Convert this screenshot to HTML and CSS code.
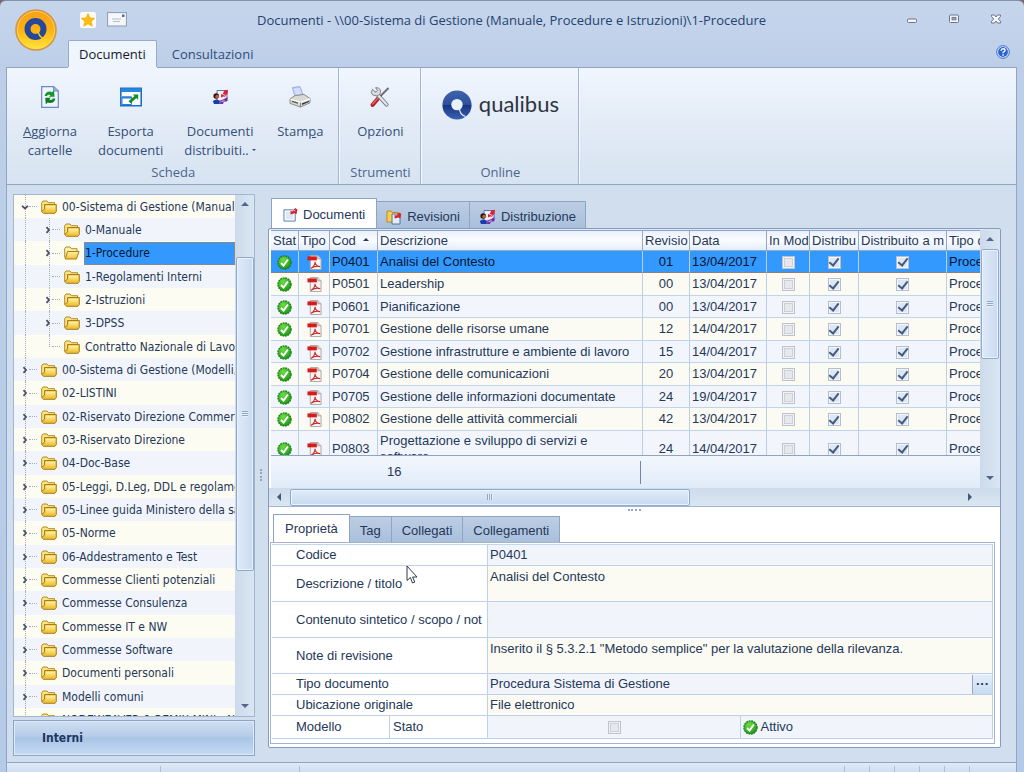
FILE: index.html
```html
<!DOCTYPE html>
<html lang="it">
<head>
<meta charset="utf-8">
<title>Documenti - 1-Procedure</title>
<link rel="stylesheet" href="styles.css">
</head>
<body>
<svg class="defs" aria-hidden="true">
  <defs>
    <linearGradient id="gold" x1="0" y1="0" x2="0" y2="1"><stop offset="0" stop-color="#fff3a8"/><stop offset="1" stop-color="#f0c030"/></linearGradient>
    <linearGradient id="orbfill" x1="0" y1="0" x2="0" y2="1"><stop offset="0" stop-color="#f9a01b"/><stop offset=".5" stop-color="#fbb212"/><stop offset="1" stop-color="#ffe83a"/></linearGradient>
    <linearGradient id="navy" x1="0" y1="0" x2="0" y2="1"><stop offset="0" stop-color="#3d62ab"/><stop offset=".48" stop-color="#2f519c"/><stop offset=".5" stop-color="#17347f"/><stop offset="1" stop-color="#3a64b4"/></linearGradient>
    <radialGradient id="green" cx=".4" cy=".3" r=".8"><stop offset="0" stop-color="#6fdc45"/><stop offset="1" stop-color="#169012"/></radialGradient>
    <symbol id="folder" viewBox="0 0 16 14"><path d="M.7 11.5V2.8L2 1h4l1.3 1.7h6.2v2" fill="#fbe58a" stroke="#b58a1c"/><path d="M3.5 4.5h11.8v7L14 13.3H2.5L.7 11.5 3.5 9z" fill="#e9c044" stroke="#a97c14"/><rect x="4.5" y="5.6" width="9.8" height="6.4" fill="url(#gold)"/></symbol>
    <symbol id="folder-open" viewBox="0 0 16 14"><path d="M.7 11.5V2.8L2 1h4l1.3 1.7h5.7v3" fill="#fbf0b0" stroke="#b58a1c"/><path d="M3.6 5.5H15L12.4 13H1.2z" fill="url(#gold)" stroke="#a97c14"/></symbol>
    <symbol id="right" viewBox="0 0 8 8"><path d="M2.500 1.200 5 4 2.500 6.800" fill="none" stroke="#4a5166" stroke-width="1.800"/></symbol>
    <symbol id="down" viewBox="0 0 8 8"><path d="M1 2.800 4 5.500l3-2.700" fill="none" stroke="#4a5166" stroke-width="1.800"/></symbol>
    <symbol id="ok" viewBox="0 0 16 16"><circle cx="8" cy="8" r="7" fill="url(#green)" stroke="#18801a" stroke-width="1.4" stroke-dasharray="2 .8"/><path d="M4.2 8.6 7 11.2l4.6-6.4" fill="none" stroke="#fff" stroke-width="2.1"/></symbol>
    <symbol id="pdf" viewBox="0 0 16 16"><path d="M3.5.5h8l3.500 3.600v11.400H3.500z" fill="#f6f4f4" stroke="#a9a3a6"/><path d="M11.500.5V4H15" fill="#d8d8d8" stroke="#a9a3a6"/><path d="M.5 1.500h10v4.200H.5z" fill="#d61a1a"/><path d="M4.200 14.200C7 12.600 8.600 9.800 8.600 7.200c0 2.800 2.200 5.200 5.400 5.200-3.600-.8-7 0-9.800 1.800z" fill="none" stroke="#cf2020" stroke-width="1.100"/></symbol>
    <symbol id="doc" viewBox="0 0 16 16"><path d="M1 3h12v12H1z" fill="#fff" stroke="#4f74b0"/><path d="M3 5h8v8H3z" fill="#dbe8f7"/><path d="M8 8V4l2 .8L13 1l2.400 1.600-1 5-2-1z" fill="#d5262c"/><path d="m11 3 2 1" stroke="#fff" stroke-width=".8"/></symbol>
    <symbol id="revs" viewBox="0 0 16 16"><path d="M1 2h4l1 1.400h6V13H1z" fill="#f8cf4c" stroke="#bb8a1c"/><path d="M6 5h8v10H6z" fill="#e4edf9" stroke="#4f74b0"/><path d="M8.600 9.500V6l2 .6L13 3.400l2.200 1.400-.8 4.600-2-.8z" fill="#d5262c"/></symbol>
    <symbol id="dist" viewBox="0 0 17 16"><path d="M5 1.500h10V12H5z" fill="#f2eef9" stroke="#5a76b4"/><circle cx="4.200" cy="7" r="2.800" fill="#2c1710"/><circle cx="5.200" cy="7.600" r="1.900" fill="#b8643a"/><path d="M.8 12q3.800-3 7 0v3H2z" fill="#1c3bb0"/><path d="M9 8.400V5.600l2-1 1.200-3 3.800-.8-.4 4-1.800 1.400-.6 1.600-2-.4z" fill="#dc2338"/><path d="M8.600 11.400 12 10l3.600-2-.4 4-3 .4-1.400 2.600H8z" fill="#772aa5"/><path d="m10 4.800 3 1.600M9.500 12.600l3-1" stroke="#fff" stroke-width=".8"/></symbol>
    <symbol id="refresh" viewBox="0 0 18 22"><path d="M.7.7h12L17.300 5v16.300H.7z" fill="#edf5fd" stroke="#7088bc" stroke-width="1.200"/><path d="M12.700.7V5h4.600" fill="#9db4dc" stroke="#7088bc"/><path d="M3.600 10q1.200-4.600 5.800-4.400l1.600.6 2-1.800.6 6.400H8l1.600-1.800q-2.600-1-3.600 1z" fill="#16962a"/><path d="M14.400 12.400q-1 4.600-5.600 4.600l-2-.6-2 1.800-.6-6.400h5.600l-1.600 1.800q2.800 1 3.600-1.200z" fill="#0f7c20"/></symbol>
    <symbol id="export" viewBox="0 0 22 19"><path d="M.8.8h20.400v17.400H.8z" fill="#fafdff" stroke="#1c70cb" stroke-width="1.600"/><path d="M1 1h20v3.600H1z" fill="#2886df"/><path d="M2 9.500h9.500V17H2z" fill="#fff" stroke="#2b7bd0"/><path d="M2 9h9.500v2H2z" fill="#2b7bd0"/><path d="m8.500 13.800 6-5.200L12.800 7h5.400v5.200l-1.800-1.600-5.900 5.200z" fill="#128d22"/></symbol>
    <symbol id="print" viewBox="0 0 22 22"><path d="M3.500 1.600 11 .6l3 8.400-8 2z" fill="#bccdfa" stroke="#8fa1db" stroke-width=".8"/><path d="m5 3.600 6-.8M5.600 5.600l6-.8M6.400 7.600l6-.8" stroke="#fff" stroke-width=".7"/><path d="m1 13 5-3.400L15 8.400l6 4v4.400L11.500 21 1 17.400z" fill="#d9d9d6" stroke="#82827e" stroke-width=".9"/><path d="m1.500 13.300 10 3L21 12.700" fill="none" stroke="#fff" stroke-width="1.200"/><path d="M11.500 16.500V21" stroke="#84847e"/><path d="m13 17.300 7-2.600v1.400L13 19z" fill="#3a3a38"/><path d="m3 15.300 6 1.800" stroke="#55554f" stroke-width="1.300"/></symbol>
    <symbol id="tools" viewBox="0 0 20 21"><path d="m18.500 1.500-10 10" stroke="#6b6f76" stroke-width="2"/><path d="m9.800 10-7.200 8.400" stroke="#b22127" stroke-width="4" stroke-linecap="round"/><path d="m9 10.400-6.600 7.400" stroke="#ee7575" stroke-width="1.200"/><path d="m6 6.500 10.600 11.600" stroke="#777b83" stroke-width="4" stroke-linecap="round"/><path d="m6 6.500 10.600 11.600" stroke="#e4e6ea" stroke-width="2.200" stroke-linecap="round"/><path d="M2.500 2.800 5.600 5.600 7.600 4 5.600 1.200q3.400-.6 4.800 2.200.8 5-3.600 6Q2 9.400 1.200 6.200z" fill="#d9dbe0" stroke="#777b83" stroke-width=".9"/></symbol>
    <symbol id="q" viewBox="0 0 30 30"><circle cx="15" cy="15" r="14.600" fill="url(#navy)"/><circle cx="15" cy="14.600" r="5.700" fill="#e9f1fa"/><path d="M17.500 18.500q0 6 6 8" fill="none" stroke="#e9f1fa" stroke-width="1.200"/></symbol>
  </defs>
</svg>

<header class="titlebar">
  <button class="orb" aria-label="Menu applicazione"><svg viewBox="0 0 42 42"><circle cx="21" cy="21" r="20" fill="url(#orbfill)" stroke="#d2964a" stroke-width="1.600"/><circle cx="21" cy="21" r="18.600" fill="none" stroke="#ffd766" stroke-width=".8"/><circle cx="20.500" cy="20" r="8" fill="none" stroke="#26489a" stroke-width="6"/><path d="M23 21.500q.5 6 5.500 8" fill="none" stroke="#fdc51e" stroke-width="1.600"/></svg></button>
  <div class="toprow">
    <button class="quick" aria-label="Preferiti"><svg width="16" height="16" viewBox="0 0 16 16"><rect width="16" height="16" rx="2" fill="#fbfaf4"/><path d="m8 1.500 2 4.300 4.800.5-3.500 3.200 1 4.700L8 11.900l-4.300 2.300 1-4.700L1.200 6.300 6 5.800z" fill="#fbbd10" stroke="#f0a81a" stroke-width=".6"/></svg></button>
    <button class="quick" aria-label="Messaggi"><svg width="20" height="15" viewBox="0 0 20 15"><rect x=".6" y=".6" width="18.800" height="13.400" fill="#f4f8fb" stroke="#8b9bb0"/><path d="M5 7h9M6 9.500h7" stroke="#b4bfc9"/><rect x="15" y="2.500" width="2.500" height="2.500" fill="#586aa8"/></svg></button>
    <h1 class="title">Documenti - \\00-Sistema di Gestione (Manuale, Procedure e Istruzioni)\1-Procedure</h1>
    <div class="winbtns">
      <button aria-label="Riduci"><svg width="12" height="12" viewBox="0 0 12 12"><rect x="1.500" y="5" width="9" height="3.500" rx="1" fill="#f4f6fa" stroke="#6c7686"/></svg></button>
      <button aria-label="Ingrandisci"><svg width="12" height="12" viewBox="0 0 12 12"><rect x="1.500" y="1" width="9" height="7.500" rx="1" fill="#f4f6fa" stroke="#6c7686"/><rect x="4" y="3.300" width="4" height="2.600" fill="#9aa4b4" stroke="#6c7686" stroke-width=".8"/></svg></button>
      <button aria-label="Chiudi"><svg width="12" height="12" viewBox="0 0 12 12"><path d="M1.500 1h3L6 3l1.500-2h3v1.500L8.300 5l2.200 2.300V9h-3L6 7 4.500 9h-3V7.300L3.700 5 1.500 2.500z" fill="#f4f6fa" stroke="#6c7686"/></svg></button>
    </div>
  </div>
  <nav class="mainTabs">
    <button class="mtab on">Documenti</button>
    <button class="mtab">Consultazioni</button>
    <button class="help" aria-label="Guida"><svg width="14" height="14" viewBox="0 0 14 14"><circle cx="7" cy="7" r="6.300" fill="#eaf2ff" stroke="#3b69c4"/><circle cx="7" cy="7" r="4.900" fill="#2a62cc"/><path d="M5 5.700q.2-1.900 2.100-1.900T9 5.500q0 .9-1.900 1.800v.9M7.100 9.300v1.400" fill="none" stroke="#fff" stroke-width="1.400"/></svg></button>
  </nav>
</header>

<section class="ribbon">
  <div class="group">
    <div class="tools">
      <button class="tool"><svg width="18" height="22"><use href="#refresh"/></svg><span><u>A</u>ggiorna<br>cartelle</span></button>
      <button class="tool"><svg width="22" height="22"><use href="#export"/></svg><span>Esporta<br>documenti</span></button>
      <button class="tool"><svg width="17" height="22"><use href="#dist"/></svg><span>Documenti<br>distribuiti.. <i class="caret"></i></span></button>
      <button class="tool"><svg width="22" height="22"><use href="#print"/></svg><span>Stam<u>p</u>a</span></button>
    </div>
    <div class="caption">Scheda</div>
  </div>
  <div class="group strumenti">
    <div class="tools">
      <button class="tool"><svg width="20" height="22"><use href="#tools"/></svg><span>Opzioni</span></button>
    </div>
    <div class="caption">Strumenti</div>
  </div>
  <div class="group online">
    <div class="tools">
      <button class="brand"><svg width="30" height="30"><use href="#q"/></svg><span>qualibus</span></button>
    </div>
    <div class="caption">Online</div>
  </div>
</section>

<main class="work">
  <aside class="side">
    <div class="treebox">
      <ul class="tree">
        <li><svg class="tg"><use href="#down"/></svg><i></i><svg class="fo"><use href="#folder"/></svg><span>00-Sistema di Gestione (Manual</span></li>
        <li class="sub"><svg class="tg"><use href="#right"/></svg><i></i><svg class="fo"><use href="#folder"/></svg><span>0-Manuale</span></li>
        <li class="sub sel"><svg class="tg"><use href="#right"/></svg><i></i><svg class="fo"><use href="#folder-open"/></svg><span>1-Procedure</span></li>
        <li class="sub"><svg class="tg"></svg><i></i><svg class="fo"><use href="#folder"/></svg><span>1-Regolamenti Interni</span></li>
        <li class="sub"><svg class="tg"><use href="#right"/></svg><i></i><svg class="fo"><use href="#folder"/></svg><span>2-Istruzioni</span></li>
        <li class="sub"><svg class="tg"><use href="#right"/></svg><i></i><svg class="fo"><use href="#folder"/></svg><span>3-DPSS</span></li>
        <li class="sub last"><svg class="tg"></svg><i></i><svg class="fo"><use href="#folder"/></svg><span>Contratto Nazionale di Lavor</span></li>
        <li><svg class="tg"><use href="#right"/></svg><i></i><svg class="fo"><use href="#folder"/></svg><span>00-Sistema di Gestione (Modelli,</span></li>
        <li><svg class="tg"><use href="#right"/></svg><i></i><svg class="fo"><use href="#folder"/></svg><span>02-LISTINI</span></li>
        <li><svg class="tg"><use href="#right"/></svg><i></i><svg class="fo"><use href="#folder"/></svg><span>02-Riservato Direzione Commer</span></li>
        <li><svg class="tg"><use href="#right"/></svg><i></i><svg class="fo"><use href="#folder"/></svg><span>03-Riservato Direzione</span></li>
        <li><svg class="tg"><use href="#right"/></svg><i></i><svg class="fo"><use href="#folder"/></svg><span>04-Doc-Base</span></li>
        <li><svg class="tg"><use href="#right"/></svg><i></i><svg class="fo"><use href="#folder"/></svg><span>05-Leggi, D.Leg, DDL e regolame</span></li>
        <li><svg class="tg"><use href="#right"/></svg><i></i><svg class="fo"><use href="#folder"/></svg><span>05-Linee guida Ministero della sa</span></li>
        <li><svg class="tg"><use href="#right"/></svg><i></i><svg class="fo"><use href="#folder"/></svg><span>05-Norme</span></li>
        <li><svg class="tg"><use href="#right"/></svg><i></i><svg class="fo"><use href="#folder"/></svg><span>06-Addestramento e Test</span></li>
        <li><svg class="tg"><use href="#right"/></svg><i></i><svg class="fo"><use href="#folder"/></svg><span>Commesse Clienti potenziali</span></li>
        <li><svg class="tg"><use href="#right"/></svg><i></i><svg class="fo"><use href="#folder"/></svg><span>Commesse Consulenza</span></li>
        <li><svg class="tg"><use href="#right"/></svg><i></i><svg class="fo"><use href="#folder"/></svg><span>Commesse IT e NW</span></li>
        <li><svg class="tg"><use href="#right"/></svg><i></i><svg class="fo"><use href="#folder"/></svg><span>Commesse Software</span></li>
        <li><svg class="tg"><use href="#right"/></svg><i></i><svg class="fo"><use href="#folder"/></svg><span>Documenti personali</span></li>
        <li><svg class="tg"><use href="#right"/></svg><i></i><svg class="fo"><use href="#folder"/></svg><span>Modelli comuni</span></li>
        <li><svg class="tg"><use href="#right"/></svg><i></i><svg class="fo"><use href="#folder"/></svg><span>NODEWEAVER &amp; REMIX MINI - N</span></li>
      </ul>
      <div class="vbar"><b class="up"></b><div class="thumb treethumb"><em></em></div><b class="dn"></b></div>
    </div>
    <button class="interni">Interni</button>
  </aside>
  <div class="split"><em></em></div>

  <section class="content">
    <nav class="tabs">
      <button class="tab on"><svg width="15" height="15"><use href="#doc"/></svg>Documenti</button>
      <button class="tab"><svg width="16" height="16"><use href="#revs"/></svg>Revisioni</button>
      <button class="tab"><svg width="17" height="16"><use href="#dist"/></svg>Distribuzione</button>
    </nav>
    <div class="panel">
      <div class="gridbox">
        <div class="gridmain">
          <div class="scroll">
            <table class="grid">
              <colgroup><col class="c1"><col class="c2"><col class="c3"><col><col class="c5"><col class="c6"><col class="c7"><col class="c8"><col class="c9"><col class="c10"></colgroup>
              <thead><tr><th>Stat</th><th>Tipo</th><th>Cod <i class="sort"></i></th><th>Descrizione</th><th>Revisio</th><th>Data</th><th>In Mod</th><th>Distribu</th><th>Distribuito a m</th><th>Tipo d</th></tr></thead>
              <tbody>
                <tr class="sel"><td class="c"><svg class="ic"><use href="#ok"/></svg></td><td class="c"><svg class="ic"><use href="#pdf"/></svg></td><td>P0401</td><td>Analisi del Contesto</td><td class="c">01</td><td>13/04/2017</td><td class="c"><input type="checkbox" disabled aria-label="In modifica"></td><td class="c"><input type="checkbox" checked aria-label="Distribuito"></td><td class="c"><input type="checkbox" checked aria-label="Distribuito a mano"></td><td>Proce</td></tr>
                <tr><td class="c"><svg class="ic"><use href="#ok"/></svg></td><td class="c"><svg class="ic"><use href="#pdf"/></svg></td><td>P0501</td><td>Leadership</td><td class="c">00</td><td>13/04/2017</td><td class="c"><input type="checkbox" disabled aria-label="In modifica"></td><td class="c"><input type="checkbox" checked aria-label="Distribuito"></td><td class="c"><input type="checkbox" checked aria-label="Distribuito a mano"></td><td>Proce</td></tr>
                <tr><td class="c"><svg class="ic"><use href="#ok"/></svg></td><td class="c"><svg class="ic"><use href="#pdf"/></svg></td><td>P0601</td><td>Pianificazione</td><td class="c">00</td><td>13/04/2017</td><td class="c"><input type="checkbox" disabled aria-label="In modifica"></td><td class="c"><input type="checkbox" checked aria-label="Distribuito"></td><td class="c"><input type="checkbox" checked aria-label="Distribuito a mano"></td><td>Proce</td></tr>
                <tr><td class="c"><svg class="ic"><use href="#ok"/></svg></td><td class="c"><svg class="ic"><use href="#pdf"/></svg></td><td>P0701</td><td>Gestione delle risorse umane</td><td class="c">12</td><td>14/04/2017</td><td class="c"><input type="checkbox" disabled aria-label="In modifica"></td><td class="c"><input type="checkbox" checked aria-label="Distribuito"></td><td class="c"><input type="checkbox" checked aria-label="Distribuito a mano"></td><td>Proce</td></tr>
                <tr><td class="c"><svg class="ic"><use href="#ok"/></svg></td><td class="c"><svg class="ic"><use href="#pdf"/></svg></td><td>P0702</td><td>Gestione infrastrutture e ambiente di lavoro</td><td class="c">15</td><td>14/04/2017</td><td class="c"><input type="checkbox" disabled aria-label="In modifica"></td><td class="c"><input type="checkbox" checked aria-label="Distribuito"></td><td class="c"><input type="checkbox" checked aria-label="Distribuito a mano"></td><td>Proce</td></tr>
                <tr><td class="c"><svg class="ic"><use href="#ok"/></svg></td><td class="c"><svg class="ic"><use href="#pdf"/></svg></td><td>P0704</td><td>Gestione delle comunicazioni</td><td class="c">20</td><td>13/04/2017</td><td class="c"><input type="checkbox" disabled aria-label="In modifica"></td><td class="c"><input type="checkbox" checked aria-label="Distribuito"></td><td class="c"><input type="checkbox" checked aria-label="Distribuito a mano"></td><td>Proce</td></tr>
                <tr><td class="c"><svg class="ic"><use href="#ok"/></svg></td><td class="c"><svg class="ic"><use href="#pdf"/></svg></td><td>P0705</td><td>Gestione delle informazioni documentate</td><td class="c">24</td><td>19/04/2017</td><td class="c"><input type="checkbox" disabled aria-label="In modifica"></td><td class="c"><input type="checkbox" checked aria-label="Distribuito"></td><td class="c"><input type="checkbox" checked aria-label="Distribuito a mano"></td><td>Proce</td></tr>
                <tr><td class="c"><svg class="ic"><use href="#ok"/></svg></td><td class="c"><svg class="ic"><use href="#pdf"/></svg></td><td>P0802</td><td>Gestione delle attività commerciali</td><td class="c">42</td><td>13/04/2017</td><td class="c"><input type="checkbox" disabled aria-label="In modifica"></td><td class="c"><input type="checkbox" checked aria-label="Distribuito"></td><td class="c"><input type="checkbox" checked aria-label="Distribuito a mano"></td><td>Proce</td></tr>
                <tr class="tall"><td class="c"><svg class="ic"><use href="#ok"/></svg></td><td class="c"><svg class="ic"><use href="#pdf"/></svg></td><td>P0803</td><td>Progettazione e sviluppo di servizi e<br>software</td><td class="c">24</td><td>14/04/2017</td><td class="c"><input type="checkbox" disabled aria-label="In modifica"></td><td class="c"><input type="checkbox" checked aria-label="Distribuito"></td><td class="c"><input type="checkbox" checked aria-label="Distribuito a mano"></td><td>Proce</td></tr>
              </tbody>
            </table>
          </div>
          <div class="total"><span>16</span><hr></div>
        </div>
        <div class="vbar wide"><b class="up"></b><div class="thumb gridthumb"><em></em></div><b class="dn"></b></div>
      </div>
      <div class="hbar"><b class="lf"></b><div class="hthumb"><em></em></div><b class="rt"></b></div>
      <div class="hsplit"><em></em></div>
      <div class="details">
        <nav class="tabs low">
          <button class="tab on">Proprietà</button>
          <button class="tab">Tag</button>
          <button class="tab">Collegati</button>
          <button class="tab">Collegamenti</button>
        </nav>
        <div class="props">
          <table>
            <colgroup><col class="p1"><col class="p2"><col><col></colgroup>
            <tr class="line"><th colspan="2">Codice</th><td colspan="2">P0401</td></tr>
            <tr class="memo"><th colspan="2">Descrizione / titolo</th><td colspan="2" class="warm">Analisi del Contesto</td></tr>
            <tr class="memo"><th colspan="2">Contenuto sintetico / scopo / not</th><td colspan="2"></td></tr>
            <tr class="memo"><th colspan="2">Note di revisione</th><td colspan="2" class="warm">Inserito il § 5.3.2.1 "Metodo semplice" per la valutazione della rilevanza.</td></tr>
            <tr class="line"><th colspan="2">Tipo documento</th><td colspan="2"><div class="lookup"><span>Procedura Sistema di Gestione</span><button aria-label="Sfoglia">···</button></div></td></tr>
            <tr class="line"><th colspan="2">Ubicazione originale</th><td colspan="2" class="warm">File elettronico</td></tr>
            <tr class="flags"><th><label for="modello">Modello</label></th><th class="stato">Stato</th><td class="c"><input id="modello" type="checkbox" disabled></td><td><div class="state"><svg class="ic"><use href="#ok"/></svg>Attivo</div></td></tr>
          </table>
        </div>
        <svg class="cursor" width="12" height="19" viewBox="0 0 12 19"><path d="M1 1v14.500l3.400-3L6.500 18l2.300-1-2.200-5H11z" fill="#fff" stroke="#333a4c"/></svg>
      </div>
    </div>
  </section>
</main>

<footer class="status"><span class="s1"></span><span class="s2"></span><span class="grow"></span><span class="s3"></span><span class="s3"></span><span class="s3"></span><span class="s3"></span><span class="s3"></span><span class="s3"></span></footer>
</body>
</html>
```

FILE: styles.css
```css
* { box-sizing: border-box; }

html { background: #7d6470; }

body {
  margin: 0;
  height: 100vh;
  display: flex;
  flex-direction: column;
  padding: 0 7px 0 6px;
  overflow: hidden;
  font: 13px/16px "Liberation Sans", Arial, sans-serif;
  color: #253858;
  background: linear-gradient(#c5d5ec, #bdcfe8 67px, #b5cae6);
  border-top: 1px solid #8594ac;
  border-radius: 6px 6px 0 0;
}

button {
  font: inherit;
  color: inherit;
  background: none;
  border: 0;
  padding: 0;
  margin: 0;
}

svg { flex: none; }
.defs { position: absolute; width: 0; height: 0; }

/* Title bar */
.titlebar, .ribbon { font-family: "Open Sans", "Noto Sans", sans-serif; }
.titlebar { position: relative; height: 66px; flex: none; display: flex; flex-direction: column; }
.orb { position: absolute; left: 9px; top: 8px; width: 42px; height: 42px; }
.orb svg { display: block; }
.toprow { height: 37px; display: flex; align-items: center; padding-left: 74px; gap: 11px; }
.quick { height: 16px; display: flex; align-items: center; }
.title { flex: 1; margin: 0 10px 0 0; text-align: center; font-size: 13px; font-weight: 400; line-height: 18px; white-space: nowrap; color: #26436f; }
.winbtns { display: flex; gap: 30px; padding-right: 15px; }
.winbtns button { width: 12px; height: 12px; }
.winbtns svg { display: block; }
.mainTabs { flex: 1; display: flex; padding: 2px 0 0 62px; color: #2f4d7c; }
.mtab { padding: 0 10px; margin-right: 4px; font-size: 13px; border: 1px solid transparent; border-bottom: 0; }
.mtab.on { color: #111b2c; background: #eff5fd; border-color: #98abc8; border-radius: 2px 2px 0 0; box-shadow: 0 1px #eff5fd; z-index: 1; }
.help { margin-left: auto; padding-right: 7px; height: 24px; display: flex; align-items: center; }

/* Ribbon */
.ribbon {
  flex: none;
  height: 118px;
  display: flex;
  color: #354f78;
  background: linear-gradient(#f1f6fe, #e3ecf7 45%, #d7e3f1);
  border: 1px solid #91a4c1;
}
.group { display: flex; flex-direction: column; border-right: 1px solid #a3b7d4; box-shadow: 1px 0 #f4f8fd; padding: 0 8px 2px 9px; }
.tools { flex: 1; display: flex; justify-content: center; gap: 7px; }
.tool { display: flex; flex-direction: column; align-items: center; padding: 0 7px; font-size: 13px; line-height: 19px; white-space: nowrap; }
.tool svg { margin-top: 18px; }
.tool span { margin-top: auto; height: 40px; }
.caption { text-align: center; font-size: 13px; line-height: 20px; color: #4a658f; }
.strumenti { width: 82px; }
.online { width: 158px; }
.caret { display: inline-block; border: 2px solid transparent; border-top-color: #354f78; vertical-align: 2px; }
.brand { display: flex; align-items: center; gap: 7px; height: 34px; margin-top: 20px; font: 22px/28px Lato, sans-serif; color: #2f3440; }
.brand span { padding-bottom: 2px; }

/* Work area */
.work {
  flex: 1;
  min-height: 0;
  display: flex;
  padding: 9px 15px 6px 6px;
  background: #d0deed;
  border: solid #8fa6c8;
  border-width: 0 1px;
}
.side { width: 242px; display: flex; flex-direction: column; gap: 3px; }
.treebox { flex: 1; min-height: 0; display: flex; border: 1px solid #a0b6d3; background: #fff; overflow: hidden; }
.tree { flex: 1; min-width: 0; margin: 0; padding: 0; list-style: none; overflow: hidden; font: 12px/16px "DejaVu Sans Condensed", "DejaVu Sans", sans-serif; }
.tree li { position: relative; display: flex; align-items: center; height: 23px; padding-left: 7px; background: #fdfcf3; white-space: nowrap; }
.tree li:nth-child(3n) { height: 24px; }
.tree li:nth-child(even) { background: #f1f5fb; }
.tree li.sub { padding-left: 30px; }
.tree li::before, .tree li.sub::after { content: ""; position: absolute; left: 11px; top: 0; bottom: 0; border-left: 1px dotted #a5afc2; }
.tree li.sub::after { left: 35px; }
.tree li.sub.last::after { bottom: 50%; }
.tg { width: 8px; height: 8px; z-index: 1; }
.tree i { width: 8px; border-top: 1px dotted #a5afc2; margin-right: 4px; }
.fo { width: 16px; height: 14px; }
.tree span { flex: 1; min-width: 0; overflow: hidden; margin-left: 4px; padding-left: 1px; }
.tree .sel span { color: #041530; background: #3399ff; border: 1px solid #8c8684; line-height: 21px; padding-left: 0; }

.interni { height: 36px; flex: none; text-align: left; padding-left: 28px; font: bold 12px/16px "DejaVu Sans Condensed", "DejaVu Sans", sans-serif; color: #1d365f; background: linear-gradient(#cfdff2, #b5cce8 45%, #a9c5e6 50%, #c5dbf3); border: 1px solid #8ca5c9; box-shadow: inset 0 0 0 1px #dce9f7; }
.split { width: 13px; display: flex; align-items: center; justify-content: center; padding-right: 2px; }
.split em { width: 2px; height: 12px; border-left: 2px dotted #93a5c0; }

/* Scroll bars */
.vbar { width: 19px; flex: none; display: flex; flex-direction: column; align-items: center; background: linear-gradient(90deg, #ccdaea, #dae6f2); }
.vbar.wide { width: 20px; }
.vbar b, .hbar b { width: 0; height: 0; border: 4px solid transparent; }
.vbar .up { border-bottom-color: #53658a; border-top: 0; margin: 7px 0 8px; }
.vbar .dn { border-top-color: #53658a; border-bottom: 0; margin: auto 0 8px; }
.thumb, .hthumb { display: flex; align-items: center; justify-content: center; border: 1px solid #90a9cf; border-radius: 2px; background: linear-gradient(90deg, #dfeaf8, #cadbf0); box-shadow: inset 0 0 0 1px #eaf2fb; }
.thumb { width: 18px; }
.thumb em { width: 6px; height: 6px; background: repeating-linear-gradient(#8fa6c9 0 1px, #e8f0fa 1px 2px); }
.treethumb { height: 314px; margin-top: 43px; }
.gridthumb { height: 110px; }
.hbar { height: 19px; flex: none; display: flex; align-items: center; padding: 0 28px 0 6px; background: linear-gradient(#cddbeb, #dbe6f2); border-bottom: 1px solid #a2b5d2; }
.hbar .lf { border-right-color: #43577d; border-left: 0; margin: 0 9px 0 2px; }
.hbar .rt { border-left-color: #43577d; border-right: 0; margin-left: auto; }
.hthumb { width: 400px; height: 17px; background: linear-gradient(#dfebf9, #c8daef); }
.hthumb em { width: 6px; height: 6px; background: repeating-linear-gradient(90deg, #8fa6c9 0 1px, #e8f0fa 1px 2px); }

/* Content tabs */
.content { flex: 1; min-width: 0; display: flex; flex-direction: column; padding: 4px 0 8px; }
.tabs { display: flex; align-items: flex-end; padding-left: 3px; height: 30px; flex: none; }
.tab { display: flex; align-items: center; gap: 5px; height: 27px; padding: 3px 9px 0; border: 1px solid #8da4c5; border-width: 1px 1px 0 0; background: linear-gradient(#bccde3, #a9c0dc); white-space: nowrap; }
.tab.on { height: 30px; padding: 2px 11px 0; border-left-width: 1px; background: #fff; }

.panel { flex: 1; min-height: 0; display: flex; flex-direction: column; background: #fff; border: 1px solid #859cc0; border-radius: 2px; box-shadow: inset 0 1px #dde8f5; }
.gridbox { flex: 1; min-height: 0; display: flex; padding: 1px 0 0 2px; }
.gridmain { flex: 1; min-width: 0; display: flex; flex-direction: column; }
.scroll { flex: 1; min-height: 0; overflow: hidden; border-top: 1px solid #8fa4c3; }
table { border-collapse: separate; border-spacing: 0; table-layout: fixed; width: 100%; }
.c1 { width: 28px; } .c2 { width: 31px; } .c3 { width: 48px; }
.c5 { width: 47px; } .c6 { width: 77px; } .c7 { width: 43px; } .c8 { width: 49px; } .c9 { width: 88px; } .c10 { width: 33px; }
.grid th, .grid td { padding: 0 0 0 2px; overflow: hidden; white-space: nowrap; text-align: left; font-weight: 400; border-right: 1px solid #b9cfe8; border-bottom: 1px solid #c0d5ec; }
.grid th { height: 20px; background: linear-gradient(#e9f1fb, #fafcff 50%, #e3edf9); border-color: #93a9c7; }
.grid th:last-child, .grid td:last-child { border-right: 0; }
.grid td { height: 22px; }
.grid tr:nth-child(even) td { height: 23px; background: #fbfbf4; }
.grid tr:nth-child(odd) td { background: #f2f6fc; }
.grid tbody tr.sel td { color: #041530; background: #3399ff; border-bottom-color: #8c7f78; }
.grid tr.tall td { height: 36px; line-height: 16px; }
.grid td.c, td.c { text-align: center; padding: 0; }
.sort { display: inline-block; border: 3px solid transparent; border-top: 0; border-bottom-color: #26395c; margin-left: 4px; vertical-align: 4px; }
.ic { width: 15px; height: 15px; vertical-align: middle; }
.total { flex: none; height: 33px; display: flex; align-items: center; justify-content: space-between; padding: 0 339px 0 116px; background: linear-gradient(#f2f7fd, #e0ebf9); border-top: 1px solid #8fa4c3; }
.total hr { width: 1px; height: 23px; margin: 0; border: 0; background: #75869f; }

input[type="checkbox"] { appearance: none; display: inline-grid; place-items: center; width: 13px; height: 13px; margin: 0; vertical-align: middle; border: 1px solid #b3bfd0; background: #dce7f4; box-shadow: inset 0 0 0 1px #f4f8fc; }
input:checked::before { content: ""; width: 4px; height: 8px; margin-top: -2px; border: solid #465a80; border-width: 0 2px 2px 0; transform: rotate(38deg); }
input[type="checkbox"]:disabled { border-color: #bfc2ca; background: #e6e8ec; box-shadow: inset 0 0 0 1px #f1f2f5, inset 0 0 0 2px #cdd0d8; }

/* Details */
.hsplit { height: 7px; flex: none; display: flex; justify-content: center; }
.hsplit em { width: 13px; height: 2px; margin-top: 2px; border-top: 2px dotted #93a5c0; }
.details { position: relative; flex: none; padding: 0 5px 3px 1px; }
.low { height: 28px; }
.low .tab { height: 26px; padding: 2px 10px 0; }
.low .tab.on { height: 28px; padding: 1px 11px 0; }
.props { padding: 1px 1px 4px; border: 1px solid #a1b4d0; }
.props table { border-top: 1px solid #c3d6ec; }
.p1 { width: 118px; } .p2 { width: 98px; }
.props th { text-align: left; font-weight: 400; padding: 0 0 0 24px; }
.props th.stato { padding-left: 3px; }
.props th, .props td { overflow: hidden; white-space: nowrap; border-right: 1px solid #bdd2ea; border-bottom: 1px solid #bdd2ea; }
.props td { padding: 0 0 0 2px; background: #f1f5fb; }
.props td.warm { background: #fbfbf4; }
.props .line > * { height: 21px; }
.props .memo > * { height: 36px; }
.props .memo td { vertical-align: top; padding-top: 3px; }
.props .flags > * { height: 23px; }
.lookup { display: flex; justify-content: space-between; align-items: center; }
.lookup button { width: 20px; height: 19px; font-weight: bold; background: linear-gradient(#e4eefa, #c7daf0); border-left: 1px solid #93a9c7; }
.state { display: flex; align-items: center; gap: 3px; }
.cursor { position: absolute; left: 137px; top: 51px; }

/* Status bar */
.status { flex: none; height: 10px; display: flex; align-items: flex-end; background: linear-gradient(#dfe9f6, #cfdff0); border: 1px solid #8fa6c8; border-bottom: 0; }
.status span { height: 6px; border-right: 1px solid #aebfd7; }
.s1 { width: 154px; }
.s2 { width: 139px; }
.grow { flex: 1; }
.s3 { width: 25px; }
.status .s3:last-child { width: 46px; border: 0; }
```
